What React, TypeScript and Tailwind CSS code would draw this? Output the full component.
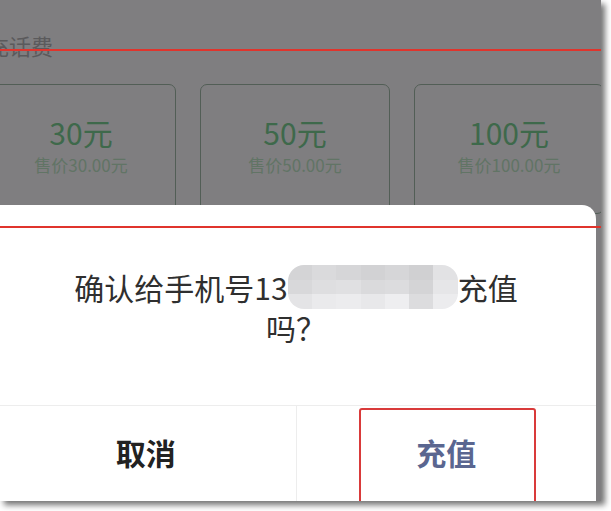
import React from "react";

const font = { fontFamily: '"Noto Sans CJK SC", "Noto Sans", sans-serif' };

const plans = [
  { amount: "30元", price: "售价30.00元" },
  { amount: "50元", price: "售价50.00元" },
  { amount: "100元", price: "售价100.00元" },
];

// mosaic shades for the hidden phone number
const mosaic = [
  "#d4d4d6", "#dadadc", "#d6d6d8", "#d2d2d4", "#d6d6d8", "#d0d0d2", "#e2e2e4",
  "#d8d8da", "#dedee0", "#e0e0e2", "#dadadc", "#dcdcde", "#d4d4d6", "#e6e6e8",
  "#e4e4e6", "#eaeaec", "#ececee", "#e8e8ea", "#eeeef0", "#dcdcde", "#ececee",
];

function Mosaic() {
  return (
    <span className="inline-grid h-[44px] w-[170px] grid-cols-7 grid-rows-3 overflow-hidden rounded-[16px] align-middle">
      {mosaic.map((c, i) => (
        <span key={i} style={{ backgroundColor: c }} />
      ))}
    </span>
  );
}

export default function App() {
  return (
    <div className="h-[511px] w-[611px] bg-white" style={font}>
      <div className="relative h-[501px] w-[601px] overflow-hidden bg-[#7f7e80] shadow-[4px_4px_6px_rgba(0,0,0,0.55)]">
        {/* page behind the overlay */}
        <div className="pt-[31px]">
          <div className="ml-[-13px] text-[22px] leading-[28px] text-[#5b5a5c]">充话费</div>
          <div className="ml-[-14px] mt-[25px] flex gap-[24px]">
            {plans.map((p) => (
              <div
                key={p.amount}
                className="flex h-[130px] w-[190px] shrink-0 flex-col items-center rounded-[7px] border-[1.5px] border-[#525e56] pt-[28px]"
              >
                <div className="text-[30px] leading-[38px] text-[#3e694b]">{p.amount}</div>
                <div className="mt-[2px] text-[17px] leading-[24px] text-[#617465]">{p.price}</div>
              </div>
            ))}
          </div>
        </div>

        {/* confirm dialog */}
        <div className="absolute left-[-4px] top-[205px] flex h-[310px] w-[600px] flex-col rounded-tr-[14px] bg-white">
          <div className="flex h-[200px] flex-col items-center justify-center text-[30px] leading-[36px] text-[#2f2f2f]">
            <div className="flex items-center">
              <span>确认给手机号13</span>
              <Mosaic />
              <span>充值</span>
            </div>
            <div>吗？</div>
          </div>
          <div className="flex h-[96px] border-t border-[#ededed]">
            <button className="flex flex-1 items-center justify-center pb-[2px] text-[30px] font-bold text-[#222222]">
              取消
            </button>
            <div className="w-px bg-[#ededed]" />
            <button className="flex flex-1 items-center justify-center pb-[2px] text-[30px] font-bold text-[#5a6690]">
              充值
            </button>
          </div>
        </div>

        {/* red annotations */}
        <div className="absolute left-0 top-[49px] h-[2px] w-[601px] bg-[#e0342c]" />
        <div className="absolute left-0 top-[226px] h-[2px] w-[601px] bg-[#e0342c]" />
        <div className="absolute left-[359px] top-[408px] h-[100px] w-[177px] rounded-[3px] border-2 border-[#d93a3a]" />
      </div>
    </div>
  );
}
